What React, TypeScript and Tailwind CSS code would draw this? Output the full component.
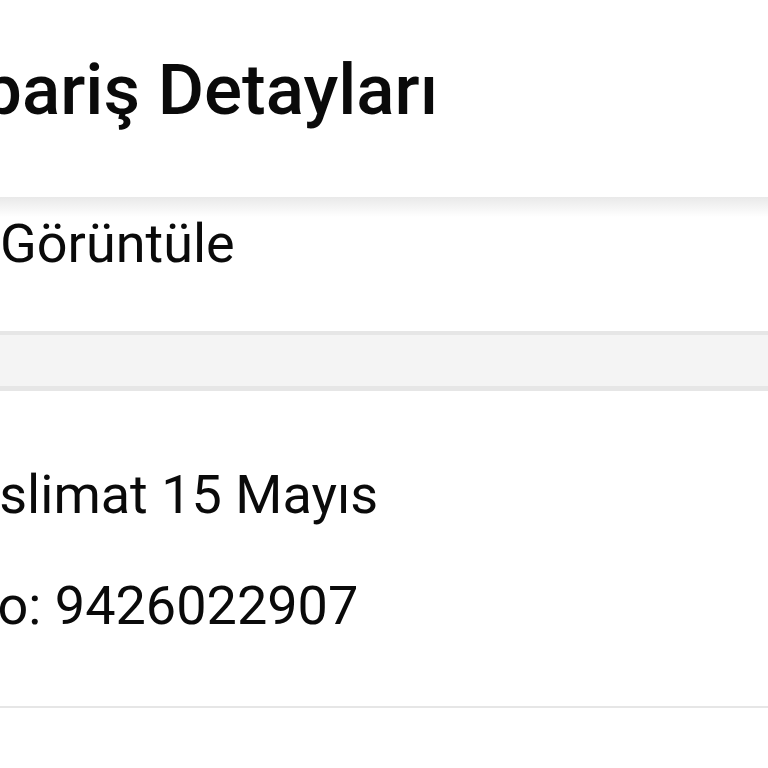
import React from "react";

export default function App() {
  return (
    <div
      className="w-[768px] h-[768px] overflow-hidden bg-white text-[#0a0a0a]"
      style={{ fontFamily: "Roboto, 'Noto Sans', sans-serif" }}
    >
      {/* Header */}
      <div className="h-[197px] pt-[54px] overflow-hidden">
        <div className="ml-[-79px] whitespace-nowrap text-[71px] font-medium leading-none">
          Sipariş Detayları
        </div>
      </div>

      {/* Card 1 */}
      <div className="relative h-[134px] pt-[20px] bg-white overflow-hidden">
        <div className="absolute inset-x-0 top-0 h-[20px] bg-gradient-to-b from-[#e9e9e9] to-white" />
        <div className="relative whitespace-nowrap text-[54px] leading-none">
          Görüntüle
        </div>
      </div>

      {/* Gray band */}
      <div className="h-[60px] bg-[#f4f4f4] border-t-[4px] border-b-[5px] border-[#e6e6e6]" />

      {/* Card 2 */}
      <div className="h-[317px] pt-[77px] overflow-hidden border-b-2 border-[#e6e6e6]">
        <div className="ml-[-59px] whitespace-nowrap text-[54px] leading-none">
          Teslimat 15 Mayıs
        </div>
        <div className="mt-[57px] ml-[-41px] whitespace-nowrap text-[54px] leading-none">
          No: 9426022907
        </div>
      </div>
    </div>
  );
}
